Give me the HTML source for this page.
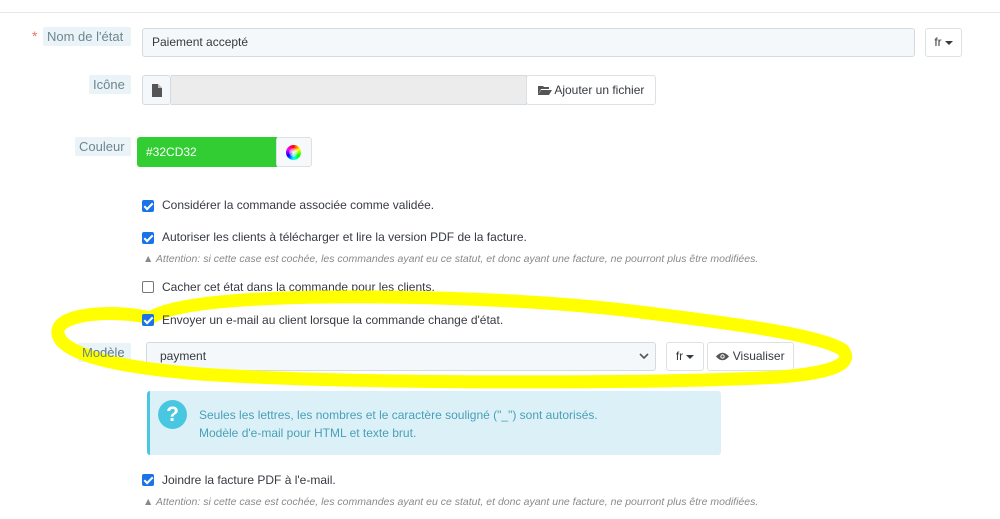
<!DOCTYPE html>
<html><head><meta charset="utf-8"><style>
*{box-sizing:border-box;margin:0;padding:0}
body{width:1000px;height:519px;background:#fff;font-family:"Liberation Sans",sans-serif;font-size:12px;color:#363a41;position:relative;overflow:hidden}
.a{position:absolute}
.lbl{position:absolute;background:#eaf4f8;color:#6c868e;font-size:13px;height:19px;line-height:19px;padding:0 4px;border-radius:2px}
.inp{position:absolute;background:#f4f8fa;border:1px solid #d3dbe0;border-radius:3px}
.btn{position:absolute;background:#fff;border:1px solid #dbe2e6;border-radius:3px;text-align:center;color:#6c868e;font-size:12px}
.cb{position:absolute;left:142px;width:12px;height:12px;border-radius:2px;background:#1a73e8}
.cb:after{content:"";position:absolute;left:4px;top:1px;width:3px;height:7px;border:solid #fff;border-width:0 2px 2px 0;transform:rotate(45deg)}
.ct{position:absolute;left:162px;font-size:12px;color:#363a41}
.att{position:absolute;left:143px;font-size:10.5px;font-style:italic;color:#8a8a8a}
.car{display:inline-block;width:0;height:0;border-left:4px solid transparent;border-right:4px solid transparent;border-top:4px solid #363a41;vertical-align:middle;margin-left:3px}
</style></head><body>
<div class="a" style="left:0;top:12px;width:1000px;height:1px;background:#e4e8ea"></div>

<div class="a" style="left:32px;top:28px;color:#e8776f;font-size:14px">*</div>
<div class="lbl" style="left:43px;top:27px;width:88px">Nom de l'état</div>
<div class="inp" style="left:142px;top:28px;width:773px;height:29px;line-height:27px;padding-left:9px">Paiement accepté</div>
<div class="btn" style="left:925px;top:28px;width:37px;height:29px;line-height:27px;color:#363a41">fr<span class="car"></span></div>

<div class="lbl" style="left:89px;top:75px;width:42px">Icône</div>
<div class="inp" style="left:142px;top:75px;width:29px;height:30px;background:#f4f8fa">
<svg class="a" style="left:9px;top:8px" width="10" height="13" viewBox="0 0 10 13"><path d="M0 0H6L10 4V13H0Z" fill="#555"/><path d="M6 0V4H10" fill="#bbb"/></svg></div>
<div class="a" style="left:171px;top:75px;width:356px;height:30px;background:#ececec;border:1px solid #d3dbe0;border-left:none"></div>
<div class="btn" style="left:526px;top:75px;width:130px;height:30px;line-height:28px;color:#363a41">
<svg width="14" height="10" viewBox="0 0 14 10" style="vertical-align:-1px"><path d="M0 1H5L6 2H11V4H3L0 10Z M3 5H14L11 10H0Z" fill="#555"/></svg> Ajouter un fichier</div>

<div class="lbl" style="left:75px;top:137px;width:56px">Couleur</div>
<div class="a" style="left:137px;top:137px;width:140px;height:30px;background:#32cd32;color:#fff;line-height:30px;padding-left:9px;font-size:12px;border-radius:3px 0 0 3px">#32CD32</div>
<div class="btn" style="left:276px;top:137px;width:36px;height:30px;background:#f6f8f9">
<div class="a" style="left:9px;top:7px;width:15px;height:15px;border-radius:50%;background:conic-gradient(red,yellow,lime,cyan,blue,magenta,red)"><div class="a" style="left:3px;top:3px;width:9px;height:9px;border-radius:50%;background:radial-gradient(#fff,rgba(255,255,255,0))"></div></div></div>

<div class="cb" style="top:200px"></div><div class="ct" style="top:198px">Considérer la commande associée comme validée.</div>
<div class="cb" style="top:232px"></div><div class="ct" style="top:230px">Autoriser les clients à télécharger et lire la version PDF de la facture.</div>
<div class="att" style="top:253px">▲ Attention: si cette case est cochée, les commandes ayant eu ce statut, et donc ayant une facture, ne pourront plus être modifiées.</div>
<div class="a" style="left:142px;top:281px;width:12px;height:12px;border:1px solid #777;border-radius:2px;background:#fff"></div><div class="ct" style="top:280px">Cacher cet état dans la commande pour les clients.</div>

<div class="lbl" style="left:78px;top:343px;width:53px">Modèle</div>
<div class="inp" style="left:146px;top:342px;width:510px;height:29px;line-height:27px;padding-left:13px">payment
<svg class="a" style="right:6px;top:10px" width="10" height="7" viewBox="0 0 10 7"><path d="M1 1L5 5L9 1" stroke="#555" stroke-width="1.6" fill="none"/></svg></div>
<div class="btn" style="left:666px;top:342px;width:38px;height:29px;line-height:27px;color:#363a41">fr<span class="car"></span></div>
<div class="btn" style="left:707px;top:342px;width:87px;height:29px;line-height:27px;color:#363a41">
<svg width="13" height="9" viewBox="0 0 13 9" style="vertical-align:-1px"><path d="M0 4.5Q6.5 -3 13 4.5Q6.5 12 0 4.5Z" fill="#555"/><circle cx="6.5" cy="4.5" r="2.2" fill="#fff"/><circle cx="6.5" cy="4.5" r="1.2" fill="#555"/></svg> Visualiser</div>

<svg class="a" style="left:0;top:0" width="1000" height="519"><path d="M150 318 C120 310 62 312 58 330 C55 350 100 366 200 374 C350 384 650 384 780 377 C840 372 852 362 843 350 C820 334 720 322 640 312 C560 302 450 296 330 297 C230 298 170 305 150 318" fill="none" stroke="#ffff00" stroke-width="13" stroke-linecap="round"/></svg>

<div class="cb" style="top:314px"></div><div class="ct" style="top:313px">Envoyer un e-mail au client lorsque la commande change d'état.</div>
<div class="a" style="left:82px;top:343px;color:#6c868e;font-size:13px;line-height:19px">Modèle</div>

<div class="a" style="left:147px;top:391px;width:574px;height:64px;background:#dcf1f7;border-left:3px solid #4ac7e0;border-radius:3px"></div>
<div class="a" style="left:158px;top:400px;width:29px;height:29px;border-radius:50%;background:#4ac7e0;color:#fff;font-weight:bold;font-size:21px;text-align:center;line-height:29px">?</div>
<div class="a" style="left:199px;top:406px;color:#4a9fb8;font-size:12px;line-height:18px">Seules les lettres, les nombres et le caractère souligné ("_") sont autorisés.<br>Modèle d'e-mail pour HTML et texte brut.</div>

<div class="cb" style="top:474px"></div><div class="ct" style="top:473px">Joindre la facture PDF à l'e-mail.</div>
<div class="att" style="top:496px">▲ Attention: si cette case est cochée, les commandes ayant eu ce statut, et donc ayant une facture, ne pourront plus être modifiées.</div>
</body></html>
